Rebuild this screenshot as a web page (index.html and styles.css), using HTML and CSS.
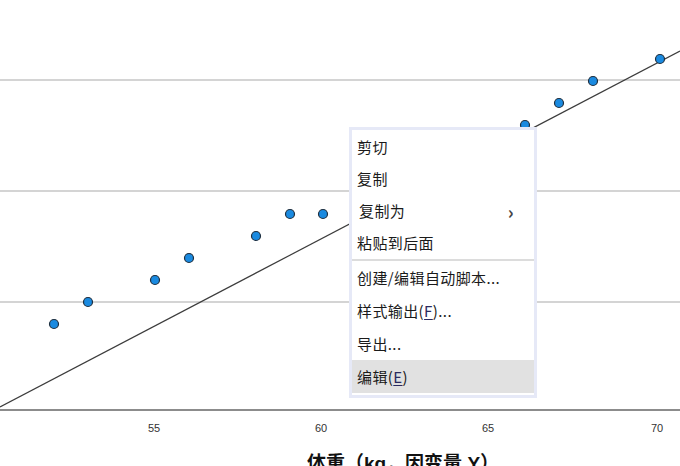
FILE: index.html
```html
<!DOCTYPE html>
<html lang="zh-CN">
<head>
    <meta charset="UTF-8">
    <title>散点图</title>
<link rel="stylesheet" href="styles.css">
</head>
<body>
    <div class="chart">
        <svg class="plot" width="680" height="466" viewBox="0 0 680 466">
            <!-- grid -->
            <line class="grid" x1="0" y1="80" x2="680" y2="80"/>
            <line class="grid" x1="0" y1="191" x2="680" y2="191"/>
            <line class="grid" x1="0" y1="302" x2="680" y2="302"/>
            <line class="axis" x1="0" y1="410" x2="680" y2="410"/>

            <!-- fit line -->
            <line class="fit" x1="0" y1="407" x2="680" y2="51"/>

            <!-- points -->
            <circle class="pt" cx="54" cy="324" r="4.5"/>
            <circle class="pt" cx="88" cy="302" r="4.5"/>
            <circle class="pt" cx="155" cy="280" r="4.5"/>
            <circle class="pt" cx="189" cy="258" r="4.5"/>
            <circle class="pt" cx="256" cy="236" r="4.5"/>
            <circle class="pt" cx="290" cy="214" r="4.5"/>
            <circle class="pt" cx="323" cy="214" r="4.5"/>
            <circle class="pt" cx="525" cy="125" r="4.5"/>
            <circle class="pt" cx="559" cy="103" r="4.5"/>
            <circle class="pt" cx="593" cy="81" r="4.5"/>
            <circle class="pt" cx="660" cy="59" r="4.5"/>

            <!-- ticks -->
            <text class="tick" x="154" y="432">55</text>
            <text class="tick" x="321" y="432">60</text>
            <text class="tick" x="488" y="432">65</text>
            <text class="tick" x="657" y="432">70</text>

            <text class="title" x="403" y="470">体重（kg，因变量 Y）</text>
        </svg>

        <div class="menu">
            <div class="item">剪切</div>
            <div class="item">复制</div>
            <div class="item sub"><span>复制为</span><span class="arrow">›</span></div>
            <div class="item">粘贴到后面</div>
            <div class="sep"></div>
            <div class="item tall">创建/编辑自动脚本...</div>
            <div class="item tall">样式输出(<u>F</u>)...</div>
            <div class="item tall">导出...</div>
            <div class="item tall active">编辑(<u>E</u>)</div>
        </div>
    </div>
</body>
</html>
```

FILE: styles.css
```css
*{
    box-sizing: border-box;
}
body{
    margin: 0;
    padding: 0;
    background: #ffffff;
    overflow: hidden;
}
.chart{
    position: relative;
    width: 680px;
    height: 466px;
}
.plot{
    display: block;
}
.grid{
    stroke: #d4d4d4;
    stroke-width: 2;
}
.axis{
    stroke: #8c8c8c;
    stroke-width: 2;
}
.fit{
    stroke: #3c3c3c;
    stroke-width: 1.2;
}
.pt{
    fill: #1a8ae0;
    stroke: #1f2f3f;
    stroke-width: 1.2;
}
.tick{
    font-family: "Liberation Sans", Arial, sans-serif;
    font-size: 11px;
    fill: #333333;
    text-anchor: middle;
}
.title{
    font-family: "Liberation Sans", "Noto Sans CJK SC", sans-serif;
    font-size: 19px;
    font-weight: bold;
    fill: #111111;
    text-anchor: middle;
}

/* context menu */
.menu{
    position: absolute;
    left: 349px;
    top: 127px;
    width: 188px;
    background: #ffffff;
    border: 3px solid #e6e9f7;
    padding: 1px 0 2px 0;
    font-family: "Noto Sans CJK SC", sans-serif;
    font-size: 15px;
    letter-spacing: 0.4px;
    color: #1a1a1a;
}
.item{
    height: 32px;
    line-height: 32px;
    padding-left: 5px;
    padding-right: 20px;
    white-space: nowrap;
}
.item.tall{
    height: 33px;
    line-height: 33px;
}
.item.sub{
    padding-left: 7px;
    display: flex;
    justify-content: space-between;
}
.arrow{
    font-size: 18px;
    color: #444444;
    font-weight: bold;
}
.item u{
    text-underline-offset: 2px;
    color: #2a2a60;
}
.sep{
    height: 2px;
    background: #dcdcdc;
}
.item.active{
    background: #e1e1e1;
}
```
